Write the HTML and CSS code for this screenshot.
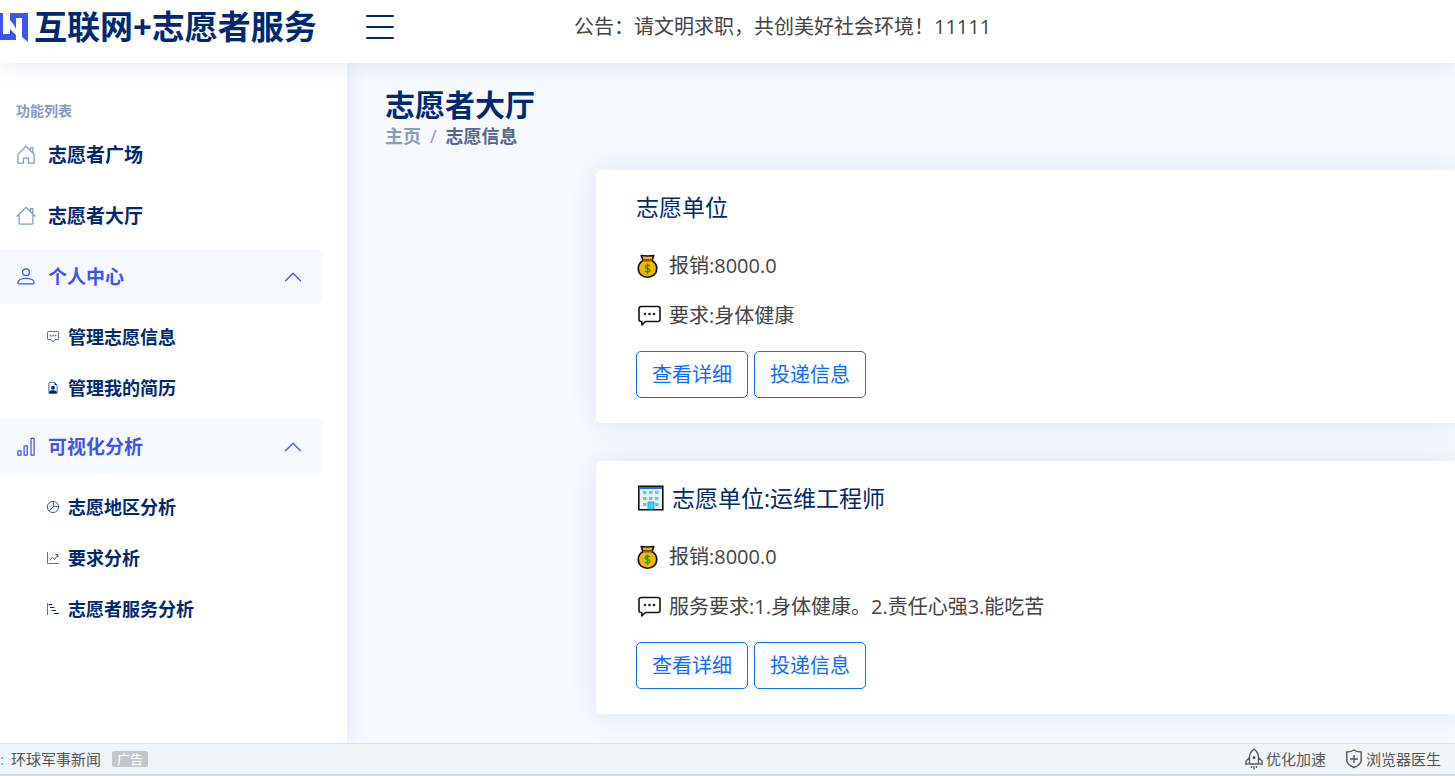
FILE: index.html
```html
<!DOCTYPE html>
<html lang="zh-CN">
<head>
<meta charset="utf-8">
<meta name="viewport" content="width=device-width, initial-scale=1">
<title>互联网+志愿者服务</title>
<link rel="stylesheet" href="styles.css">
</head>
<body>
<svg class="defs" aria-hidden="true">
  <symbol id="chevron" viewBox="0 0 16 16"><path d="M2 11l6-6 6 6" fill="none" stroke="currentColor" stroke-linecap="round" stroke-linejoin="round"/></symbol>
  <symbol id="bag" viewBox="0 0 25 26">
    <path d="M7 7.500C3.500 9.500 2.300 12.500 2.300 15.500c0 5.500 4 8.700 9.200 8.700s9.200-3.200 9.200-8.700c0-3-1.200-6-4.700-8z" fill="#fbb500" stroke="#111" stroke-width="1.600"/>
    <path d="M6.800 7L5.200 2.500c4 .6 8.600.6 12.600 0L16.200 7z" fill="#fbb500" stroke="#111" stroke-width="1.600" stroke-linejoin="round"/>
    <path d="M6.800 7.200h9.400" stroke="#b35c00" stroke-width="1.400"/>
    <path d="M13.800 13c-.5-1.200-4.500-1.500-4.500.8 0 2.400 4.600 1 4.600 3.500 0 2.200-4.300 2-5 .4M11.500 10.500v10.500" fill="none" stroke="#16a000" stroke-width="1.400"/>
  </symbol>
  <symbol id="chat" viewBox="0 0 25 22">
    <path d="M5 1.500h17a2 2 0 0 1 2 2v11a2 2 0 0 1-2 2H9.500L5.800 20v-3.500H5a2 2 0 0 1-2-2v-11a2 2 0 0 1 2-2z" fill="none" stroke="#111" stroke-width="1.600" stroke-linejoin="round"/>
    <g fill="#222"><circle cx="9" cy="9" r="1.300"/><circle cx="13.500" cy="9" r="1.300"/><circle cx="18" cy="9" r="1.300"/></g>
  </symbol>
  <symbol id="building" viewBox="0 0 28 26">
    <path d="M2.800 1.200h24v23.600h-24z" fill="#eceff1" stroke="#111" stroke-width="1.600"/>
    <path d="M3.600 2h22.400v2H3.600z" fill="#1976e8"/>
    <path d="M7 6h3.500v3H7zM13 6h3.500v3H13zM19 6h3.500v3H19zM7 12h3.500v3H7zM13 12h3.500v3H13zM19 12h3.500v3H19zM7 18h3.500v3H7zM19 18h3.500v3H19z" fill="#4cd2f5"/>
    <path d="M12 17h6v7.200h-6z" fill="#2fd5ff"/><path d="M12 24v-7h6v7" fill="none" stroke="#2a93e0" stroke-width=".8"/>
  </symbol>
</svg>

<header class="header">
  <a class="logo" href="#">
    <svg class="logo-mark" viewBox="0 0 30 32" aria-hidden="true"><path fill="#4154f1" d="M0 2h3v21h7v-5l6 6v5H0zM10 2h18v29l-6-5V7h-6v11l-2-4-4-5z"/></svg>
    <span>互联网+志愿者服务</span>
  </a>
  <button class="toggle" type="button" aria-label="切换菜单">
    <svg viewBox="0 0 30 24" aria-hidden="true"><path d="M2 1h26M2 12h26M2 23h26" stroke="currentColor" stroke-width="2" stroke-linecap="round"/></svg>
  </button>
  <p class="notice">公告：请文明求职，共创美好社会环境！11111</p>
</header>

<div class="body">
  <nav class="sidebar">
    <h2 class="nav-heading">功能列表</h2>
    <ul class="nav">
      <li><a class="nav-link" href="#"><svg class="icon" viewBox="0 0 16 16"><path fill="none" stroke="currentColor" stroke-linejoin="round" d="M1.500 7.500L8 1l6.500 6.500v7H10v-4H6v4H1.500zM11.500 4V2h2v4.500"/></svg>志愿者广场</a></li>
      <li><a class="nav-link" href="#"><svg class="icon" viewBox="0 0 16 16"><path fill="none" stroke="currentColor" stroke-linecap="round" stroke-linejoin="round" d="M.8 8.200L8 1l7.200 7.200M2.500 7v6.500a1 1 0 0 0 1 1h9a1 1 0 0 0 1-1V7M11.500 4V2h2v4.500"/></svg>志愿者大厅</a></li>
      <li>
        <a class="nav-link open" href="#"><svg class="icon" viewBox="0 0 16 16"><path fill="none" stroke="currentColor" d="M8 1.500a2.700 2.700 0 1 1 0 5.400A2.700 2.700 0 0 1 8 1.500zM2.500 13.500c-.6 0-1-.4-1-1C1.500 11 3.300 9 8 9s6.500 2 6.500 3.500c0 .6-.4 1-1 1z"/></svg>个人中心<svg class="chevron"><use href="#chevron"/></svg></a>
        <ul class="subnav">
          <li><a class="sub-link" href="#"><svg class="sub-icon" viewBox="0 0 16 16"><path fill="none" stroke="currentColor" d="M2 .5h12A1.500 1.500 0 0 1 15.500 2v8a1.500 1.500 0 0 1-1.500 1.500h-3.500L8 14.500l-2.500-3H2A1.500 1.500 0 0 1 .5 10V2A1.500 1.500 0 0 1 2 .5z"/><path fill="currentColor" d="M3.500 5.500h2V7h-2zM7 5.500h2V7H7zM10.500 5.500h2V7h-2z"/></svg>管理志愿信息</a></li>
          <li><a class="sub-link" href="#"><svg class="sub-icon" viewBox="0 0 16 16"><path fill="none" stroke="currentColor" d="M4 .5h6L13.500 4v10a1.500 1.500 0 0 1-1.500 1.500H4A1.500 1.500 0 0 1 2.500 14V2A1.500 1.500 0 0 1 4 .5z"/><path fill="currentColor" d="M10 .5V4h3.500zM8 5a2.600 2.600 0 1 1 0 5.200A2.600 2.600 0 0 1 8 5zM3 15v-2c1-1.500 3-2 5-2s4 .5 5 2v2z"/></svg>管理我的简历</a></li>
        </ul>
      </li>
      <li>
        <a class="nav-link open" href="#"><svg class="icon" viewBox="0 0 16 16"><path fill="none" stroke="currentColor" stroke-linejoin="round" d="M1.500 11h2.500v3.500H1.500zM6.500 7H9v7.500H6.500zM12 1h2.500v13.500H12z"/></svg>可视化分析<svg class="chevron"><use href="#chevron"/></svg></a>
        <ul class="subnav">
          <li><a class="sub-link" href="#"><svg class="sub-icon" viewBox="0 0 16 16"><path fill="none" stroke="currentColor" d="M8 .5a7.500 7.500 0 1 1 0 15 7.500 7.500 0 0 1 0-15zM8.500.5v7h7M8.500 7.500l-6 6"/></svg>志愿地区分析</a></li>
          <li><a class="sub-link" href="#"><svg class="sub-icon" viewBox="0 0 16 16"><path fill="none" stroke="currentColor" d="M.5 0v15.500H16M3.500 11.500L7 7l3 3 4.500-6M11 3.500h3.500V7"/></svg>要求分析</a></li>
          <li><a class="sub-link" href="#"><svg class="sub-icon" viewBox="0 0 16 16"><path fill="none" stroke="currentColor" d="M.5 0v16"/><path fill="none" stroke="currentColor" stroke-width="1.600" d="M2 2h5M4 6h6M6 10h6M9 14h7"/></svg>志愿者服务分析</a></li>
        </ul>
      </li>
    </ul>
  </nav>

  <main class="main">
    <h1 class="title">志愿者大厅</h1>
    <nav class="crumbs" aria-label="面包屑"><a href="#">主页</a><span class="slash">/</span><span class="current">志愿信息</span></nav>
    <div class="cards">
      <article class="card">
        <h2 class="card-title">志愿单位</h2>
        <p class="row"><svg class="row-icon"><use href="#bag"/></svg>报销:8000.0</p>
        <p class="row"><svg class="row-icon"><use href="#chat"/></svg>要求:身体健康</p>
        <div class="actions"><button class="btn" type="button">查看详细</button><button class="btn" type="button">投递信息</button></div>
      </article>
      <article class="card">
        <h2 class="card-title"><svg class="title-icon"><use href="#building"/></svg>志愿单位:运维工程师</h2>
        <p class="row"><svg class="row-icon"><use href="#bag"/></svg>报销:8000.0</p>
        <p class="row"><svg class="row-icon"><use href="#chat"/></svg>服务要求:1.身体健康。2.责任心强3.能吃苦</p>
        <div class="actions"><button class="btn" type="button">查看详细</button><button class="btn" type="button">投递信息</button></div>
      </article>
    </div>
  </main>
</div>

<footer class="status">
  <span class="colon">:</span>
  <a class="news" href="#">环球军事新闻</a>
  <span class="ad">广告</span>
  <button class="tool push" type="button"><svg viewBox="0 0 18 22" aria-hidden="true"><path fill="none" stroke="currentColor" stroke-width="1.300" d="M9 1C6 3.500 4.500 6 4.500 9v7h9V9c0-3-1.500-5.500-4.500-8zM4.500 9.500L1 13v3.500l3.500-1M13.500 9.500L17 13v3.500l-3.500-1M6.500 18v2M9 18v3.500M11.500 18v2"/><circle cx="9" cy="9.500" r="1.500" fill="currentColor"/></svg>优化加速</button>
  <button class="tool" type="button"><svg viewBox="0 0 18 22" aria-hidden="true"><path fill="none" stroke="currentColor" stroke-width="1.400" d="M9 2c2 1.600 4.500 2 7.200 2v8.500c0 3.500-4 5.500-7.200 7-3.200-1.500-7.200-3.500-7.200-7V4C4.500 4 7 3.600 9 2zM9 7v8M5 11h8"/></svg>浏览器医生</button>
</footer>
</body>
</html>
```
FILE: styles.css
```css
* { box-sizing: border-box; }

body {
  margin: 0;
  height: 100vh;
  display: flex;
  flex-direction: column;
  overflow: hidden;
  font-family: "Open Sans", "Noto Sans CJK SC", sans-serif;
  font-size: 20px;
  line-height: 30px;
  color: #444;
  background: #f6f9ff;
}

h1, h2, p, ul { margin: 0; padding: 0; }
ul { list-style: none; }
a { color: inherit; text-decoration: none; }
button { font: inherit; cursor: pointer; }
.defs { display: none; }

.header {
  flex: none;
  display: flex;
  align-items: center;
  height: 63px;
  padding-bottom: 10px;
  background: #fff;
  box-shadow: 0 2px 20px rgba(1, 41, 112, .1);
  z-index: 2;
}
.logo {
  display: flex;
  align-items: center;
  gap: 4px;
  width: 365px;
  font-size: 33px;
  font-weight: 700;
  line-height: 40px;
  color: #012970;
  white-space: nowrap;
}
.logo-mark { width: 30px; height: 32px; }
.toggle {
  display: flex;
  padding: 0;
  border: 0;
  background: none;
  color: #012970;
}
.toggle svg { width: 30px; height: 24px; }
.notice { margin-left: 179px; white-space: nowrap; }

.body { flex: 1; min-height: 0; display: flex; }

.sidebar {
  flex: none;
  width: 347px;
  padding: 38px 25px 0 0;
  background: #fff;
  box-shadow: 0 0 20px rgba(1, 41, 112, .1);
  z-index: 1;
}
.nav-heading {
  padding-left: 16px;
  margin-bottom: 6px;
  font-size: 14px;
  font-weight: 600;
  line-height: 20px;
  color: #899bbd;
}
.nav { display: flex; flex-direction: column; gap: 6px; }
.nav-link {
  display: flex;
  align-items: center;
  height: 55px;
  padding: 0 19px 0 16px;
  border-radius: 0 5px 5px 0;
  font-size: 19px;
  font-weight: 700;
  color: #012970;
}
.icon { width: 20px; height: 20px; margin-right: 12px; color: #899bbd; }
.nav-link.open, .open .icon { color: #4154f1; }
.nav-link.open { background: #f6f9ff; }
.chevron { width: 20px; height: 20px; margin-left: auto; }
.subnav { padding-top: 7px; }
.sub-link {
  display: flex;
  align-items: center;
  height: 51px;
  padding-left: 47px;
  gap: 9px;
  font-size: 18px;
  font-weight: 700;
  color: #012970;
}
.sub-icon { width: 12px; height: 12px; }

.main { flex: 1; min-width: 0; padding: 24px 0 0 38px; }
.title { font-size: 30px; font-weight: 700; line-height: 35px; color: #012970; }
.crumbs { display: flex; gap: 9px; font-size: 18px; line-height: 28px; font-weight: 700; color: #899bbd; }
.slash { font-weight: 400; }
.current { color: #51678f; }

.cards {
  display: flex;
  flex-direction: column;
  gap: 38px;
  padding: 20px 0 0 211px;
}
.card {
  padding: 24px 40px 25px;
  border-radius: 6px 0 0 6px;
  background: #fff;
  box-shadow: 0 0 30px rgba(1, 41, 112, .1);
}
.card-title {
  display: flex;
  align-items: center;
  gap: 8px;
  margin-bottom: 31px;
  font-size: 23px;
  font-weight: 400;
  line-height: 26px;
  color: #012970;
}
.title-icon { width: 28px; height: 26px; }
.row { display: flex; align-items: center; gap: 8px; margin-bottom: 20px; }
.row-icon { width: 25px; height: 26px; }
.actions { display: flex; gap: 6px; }
.btn {
  height: 47px;
  padding: 0 15px;
  border: 1px solid #0d6efd;
  border-radius: 5px;
  background: none;
  color: #0d6efd;
}

.status {
  flex: none;
  display: flex;
  align-items: center;
  height: 33px;
  padding-right: 14px;
  border-top: 1px solid #dbe3ea;
  border-bottom: 2px solid #cfdce4;
  background: #f1f5f8;
  font-size: 15px;
  line-height: 20px;
  color: #555;
  z-index: 3;
}
.colon { width: 11px; color: #4a9fd8; }
.ad {
  margin-left: 11px;
  padding: 0 5px;
  border-radius: 2px;
  background: #c4c6c8;
  color: #fff;
  font-size: 13px;
  line-height: 16px;
}
.tool {
  display: flex;
  align-items: center;
  gap: 3px;
  margin-left: 19px;
  padding: 0;
  border: 0;
  background: none;
  color: inherit;
}
.tool svg { width: 18px; height: 22px; }
.push { margin-left: auto; }
```
